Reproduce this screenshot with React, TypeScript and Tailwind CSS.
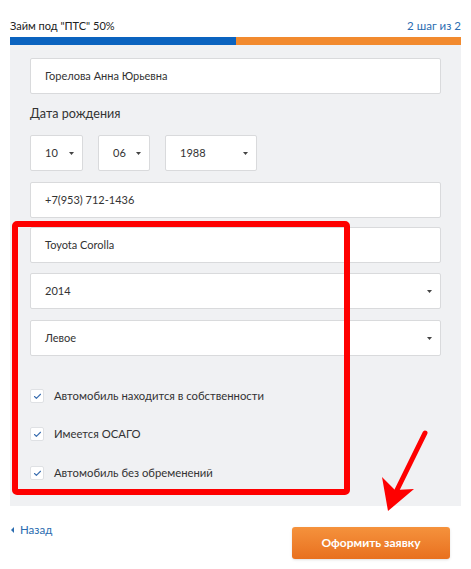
import { Check } from 'lucide-react';

const Caret = () => (
  <svg width="5" height="3" viewBox="0 0 5 3" className="shrink-0">
    <path d="M0 0 H5 L2.5 3 Z" fill="#444" />
  </svg>
);

const TextField = ({ value, className = '' }: { value: string; className?: string }) => (
  <div className={`h-[36px] bg-white border border-[#d9dadc] rounded-[2px] flex items-center pl-[14px] text-[11px] text-[#333] ${className}`}>
    {value}
  </div>
);

const SelectField = ({ value, className = '' }: { value: string; className?: string }) => (
  <div className={`h-[36px] bg-white border border-[#d9dadc] rounded-[2px] flex items-center justify-between pl-[14px] pr-[8px] text-[11px] text-[#333] ${className}`}>
    <span>{value}</span>
    <Caret />
  </div>
);

const CheckRow = ({ label, className = '' }: { label: string; className?: string }) => (
  <div className={`h-[20px] flex items-center gap-[10px] ${className}`}>
    <div className="w-[14px] h-[14px] bg-white border border-[#dfe1e4] rounded-[2px] flex items-center justify-center">
      <Check size={9} strokeWidth={3} className="text-[#3c6fb0]" />
    </div>
    <span className="text-[11.3px] text-[#333]">{label}</span>
  </div>
);

export default function App() {
  return (
    <div className="relative w-[471px] h-[569px] bg-white px-[10px] pt-[18px] overflow-hidden" style={{ fontFamily: 'Lato, "Open Sans", sans-serif' }}>
      {/* Header */}
      <div className="flex items-center justify-between h-[16px] text-[11px] leading-[16px]">
        <span className="text-[#222]">Займ под "ПТС" 50%</span>
        <span className="text-[#2b6cb0] text-[11.5px]">2 шаг из 2</span>
      </div>
      <div className="mt-[3px] h-[8px] flex">
        <div className="w-1/2 bg-[#0b63bf]" />
        <div className="w-1/2 bg-[#f28a2e]" />
      </div>

      {/* Form panel */}
      <div className="bg-[#f0f1f3] px-[20px] pt-[13px] pb-[23px] flex flex-col">
        <TextField value="Горелова Анна Юрьевна" className="h-[35px]" />
        <div className="mt-[10px] h-[20px] flex items-center text-[12.6px] text-[#333]">Дата рождения</div>
        <div className="mt-[11px] flex gap-[14px]">
          <SelectField value="10" className="w-[53px]" />
          <SelectField value="06" className="w-[52px] ml-[1px]" />
          <SelectField value="1988" className="w-[92px] ml-[1px]" />
        </div>
        <TextField value="+7(953) 712-1436" className="mt-[11px] h-[35px]" />
        <TextField value="Toyota Corolla" className="mt-[9px]" />
        <SelectField value="2014" className="mt-[10px] h-[35px]" />
        <SelectField value="Левое" className="mt-[11px]" />
        <CheckRow label="Автомобиль находится в собственности" className="mt-[30px]" />
        <CheckRow label="Имеется ОСАГО" className="mt-[18px]" />
        <CheckRow label="Автомобиль без обременений" className="mt-[19px]" />
      </div>

      {/* Footer */}
      <div className="mt-[21px] flex justify-between items-start">
        <a className="flex items-center gap-[6px] text-[11.5px] text-[#2b6cb0] -mt-[6px] ml-[1px]">
          <svg width="3" height="6" viewBox="0 0 3 6"><path d="M3 0 V6 L0 3 Z" fill="#2b6cb0" /></svg>
          Назад
        </a>
        <button className="w-[158px] h-[32px] mr-[11px] rounded-[3px] bg-gradient-to-b from-[#f5923c] to-[#e8701e] text-white text-[12px] font-bold shadow-sm">
          Оформить заявку
        </button>
      </div>

      {/* Annotation overlay */}
      <div className="absolute left-[12px] top-[221px] w-[338px] h-[274px] border-[6px] border-[#fe0000] rounded-[5px] pointer-events-none" />
      <svg className="absolute left-0 top-0 pointer-events-none" width="471" height="569">
        <line x1="425" y1="433" x2="396" y2="492" stroke="#fe0000" strokeWidth="5" strokeLinecap="round" />
        <polygon points="388,511 382,477 395,490 414,489" fill="#fe0000" />
      </svg>
    </div>
  );
}
